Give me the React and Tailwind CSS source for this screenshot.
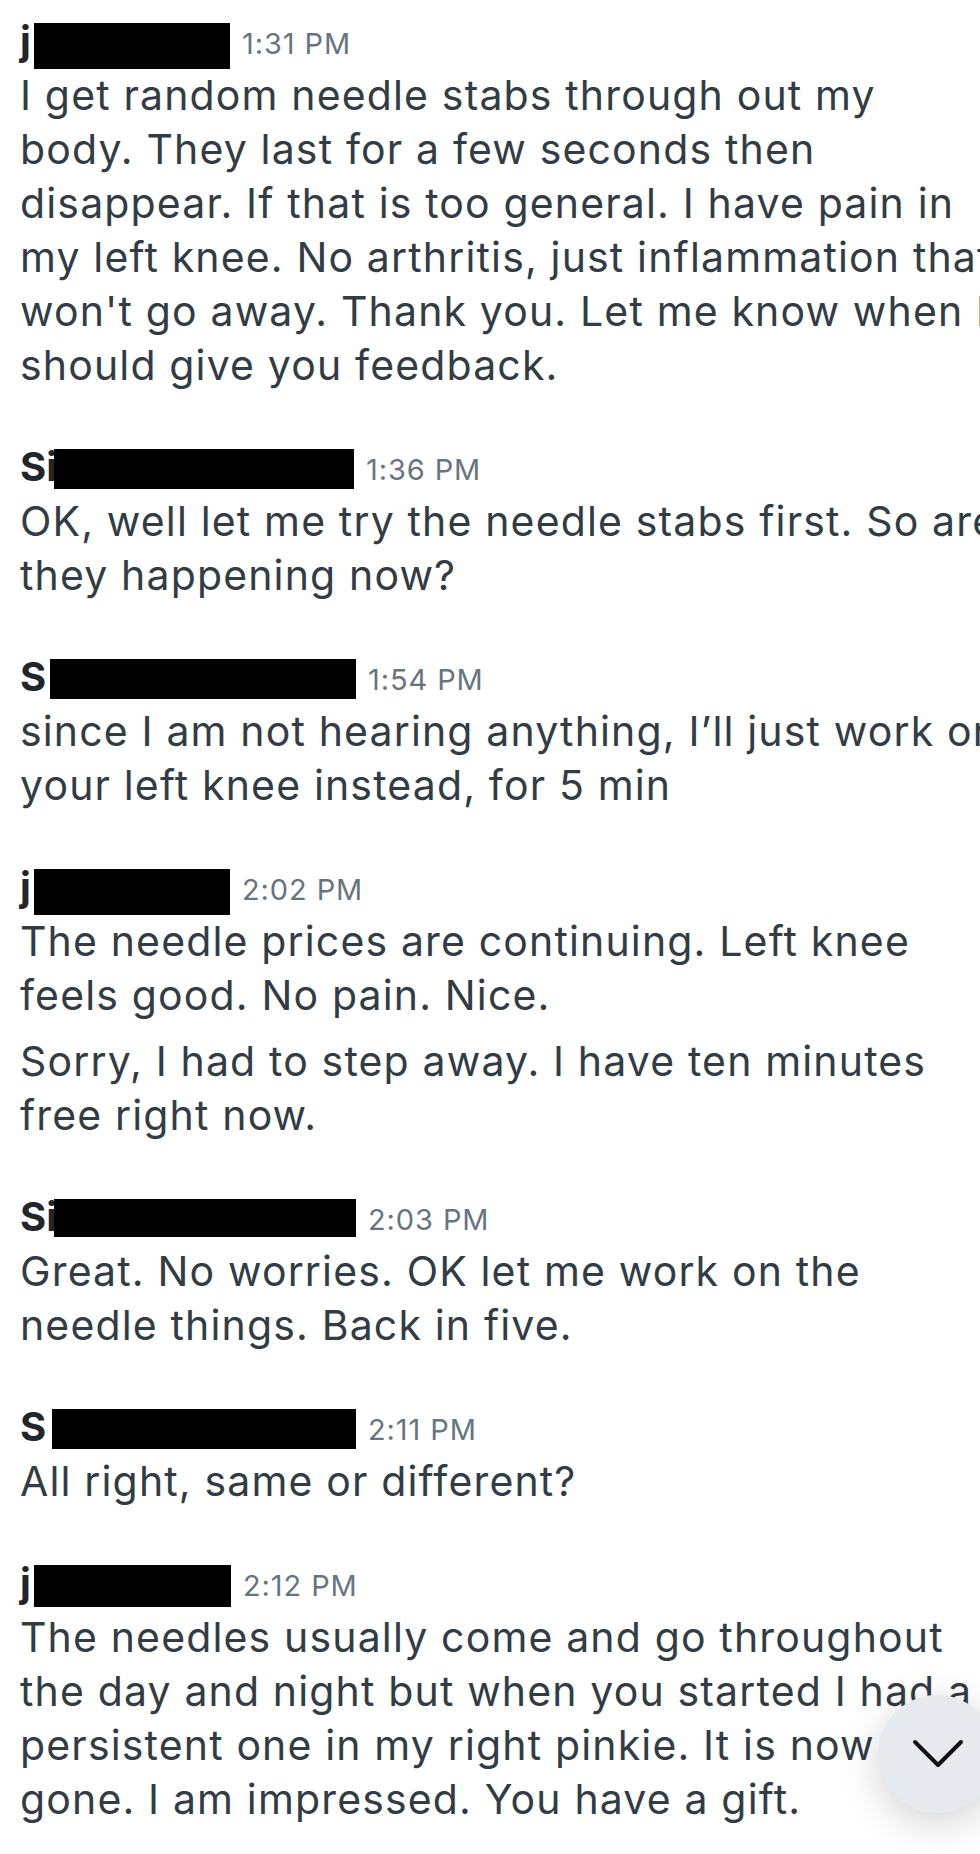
import React from 'react'

const messages = [
  {
    initial: 'j',
    nameW: 'w-[14px]',
    boxW: 'w-[196px]',
    boxH: 'h-[46px]',
    time: '1:31 PM',
    paras: [[
      'I get random needle stabs through out my',
      'body. They last for a few seconds then',
      'disappear. If that is too general. I have pain in',
      'my left knee. No arthritis, just inflammation that',
      "won't go away. Thank you. Let me know when I",
      'should give you feedback.',
    ]],
  },
  {
    initial: 'Si',
    nameW: 'w-[34px]',
    boxW: 'w-[300px]',
    boxH: 'h-[40px]',
    time: '1:36 PM',
    paras: [[
      'OK, well let me try the needle stabs first. So are',
      'they happening now?',
    ]],
  },
  {
    initial: 'S',
    nameW: 'w-[30px]',
    boxW: 'w-[306px]',
    boxH: 'h-[40px]',
    time: '1:54 PM',
    paras: [[
      'since I am not hearing anything, I\u2019ll just work on',
      'your left knee instead, for 5 min',
    ]],
  },
  {
    initial: 'j',
    nameW: 'w-[14px]',
    boxW: 'w-[196px]',
    boxH: 'h-[46px]',
    time: '2:02 PM',
    paras: [
      ['The needle prices are continuing. Left knee', 'feels good. No pain. Nice.'],
      ['Sorry, I had to step away. I have ten minutes', 'free right now.'],
    ],
  },
  {
    initial: 'Si',
    nameW: 'w-[34px]',
    boxW: 'w-[302px]',
    boxH: 'h-[38px]',
    time: '2:03 PM',
    paras: [['Great. No worries. OK let me work on the', 'needle things. Back in five.']],
  },
  {
    initial: 'S',
    nameW: 'w-[32px]',
    boxW: 'w-[304px]',
    boxH: 'h-[40px]',
    time: '2:11 PM',
    paras: [['All right, same or different?']],
  },
  {
    initial: 'j',
    nameW: 'w-[14px]',
    boxW: 'w-[197px]',
    boxH: 'h-[42px]',
    time: '2:12 PM',
    paras: [[
      'The needles usually come and go throughout',
      'the day and night but when you started I had a',
      'persistent one in my right pinkie. It is now',
      'gone. I am impressed. You have a gift.',
    ]],
  },
]

function Message({ m }) {
  return (
    <div className="flex flex-col">
      {/* sender + timestamp */}
      <div className="flex items-start h-[55px]">
        <span className={`${m.nameW} shrink-0 whitespace-nowrap text-[40px] leading-[55px] font-bold text-[#1f262c]`}>
          {m.initial}
        </span>
        <span className={`${m.boxW} ${m.boxH} mt-[10px] shrink-0 bg-black`} />
        <span className="ml-[12px] mt-[3px] text-[29px] leading-[55px] tracking-[0.9px] text-[#66757f]">{m.time}</span>
      </div>
      {m.paras.map((p, i) => (
        <div key={i} className={i > 0 ? 'mt-[12px]' : ''}>
          {p.map((line, j) => (
            <div key={j} className="whitespace-nowrap text-[41px] leading-[54px] tracking-[1.15px] text-[#323c45]">
              {line}
            </div>
          ))}
        </div>
      ))}
    </div>
  )
}

export default function App() {
  return (
    <div className="relative w-[980px] h-[1854px] overflow-hidden bg-white font-['Inter','Noto_Sans',sans-serif]">
      <div className="flex flex-col gap-[47px] pt-[13px] pl-[20px]">
        {messages.map((m, i) => (
          <Message key={i} m={m} />
        ))}
      </div>

      {/* scroll to bottom button */}
      <button className="absolute left-[878px] top-[1695px] w-[118px] h-[118px] rounded-full bg-[#e6eaee] shadow-[0_10px_40px_rgba(0,0,0,0.18)] flex items-center justify-start pl-[34px]">
        <svg width="52" height="30" viewBox="0 0 52 30" fill="none">
          <polyline points="3,3 26,26 49,3" stroke="#111" strokeWidth="4" strokeLinecap="round" strokeLinejoin="round" />
        </svg>
      </button>
    </div>
  )
}
